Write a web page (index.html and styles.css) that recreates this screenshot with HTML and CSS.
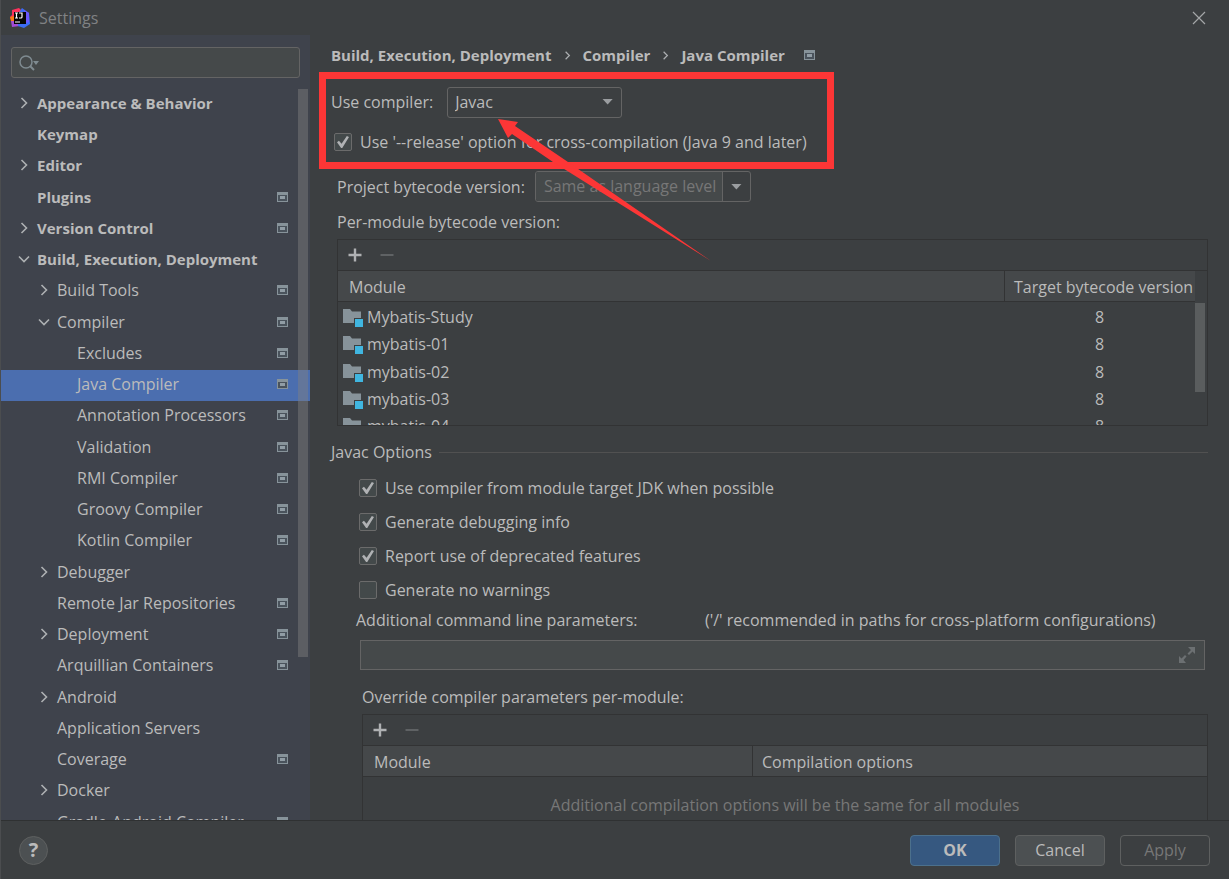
FILE: index.html
```html
<!DOCTYPE html>
<html lang="en">
<head>
<meta charset="utf-8">
<title>Settings</title>
<link rel="stylesheet" href="styles.css">
</head>
<body>
<svg class="defs" aria-hidden="true">
  <symbol id="scope" viewBox="0 0 11 10"><path d="M0 0h11v10H0z" fill="#87939a"/><path d="M1 3h9v6H1z" fill="#4a535c"/><path d="M3 4h5v3H3z" fill="#919da5"/></symbol>
  <symbol id="right" viewBox="0 0 12 12"><path d="M3.5 1 8.5 6l-5 5" fill="none" stroke="#adb0b2" stroke-width="1.6"/></symbol>
  <symbol id="down" viewBox="0 0 12 12"><path d="M1 3.500l5 5 5-5" fill="none" stroke="#adb0b2" stroke-width="1.600"/></symbol>
  <symbol id="module" viewBox="0 0 20 18"><path d="M0 0h7l2 2.500h9V9h-7v5H0z" fill="#87939a"/><path d="M12 10h8v8h-8z" fill="#40b6e0"/></symbol>
  <symbol id="plus" viewBox="0 0 14 14"><path d="M5.800.5h2.400v5.300h5.300v2.400H8.200v5.300H5.800V8.200H.5V5.800h5.300z" fill="#afb1b3"/></symbol>
  <symbol id="minus" viewBox="0 0 14 14"><path d="M.5 6h13v2H.5z" fill="#5f6264"/></symbol>
</svg>
<div class="window">
  <header class="titlebar">
    <svg class="logo" viewBox="0 0 20 20" aria-hidden="true">
      <path d="M2 2 9 0l4 4-4 7-8 1-1-3 2-2z" fill="#fe315d"/><path d="M0 9l4-1v6l-3-1z" fill="#f97a12"/><path d="M1 13h6l3 5-8 1z" fill="#a34bd5"/><path d="M12 0l7 5 1 11-6 4-6-2V6z" fill="#3b6cf5"/><path d="M14 2l5 3v9l-4 2z" fill="#6b57ff"/>
      <path d="M4 4h12v12H4z" fill="#050505"/><path d="M5 5h3M6.500 5v5M5 10h3M9 5h3v4q0 1-1 1H9M5 14h5" fill="none" stroke="#fff" stroke-width="1.200"/>
    </svg>
    <h1>Settings</h1>
    <button class="close" aria-label="Close"><svg viewBox="0 0 14 14"><path d="M1 1l12 12M13 1 1 13" stroke="#a4a6a8" stroke-width="1.200"/></svg></button>
  </header>
  <div class="body">
    <nav class="sidebar" aria-label="Settings categories">
      <div class="search">
        <svg viewBox="0 0 22 16" aria-hidden="true"><circle cx="7" cy="7" r="6" fill="none" stroke="#7f8b91" stroke-width="1.500"/><path d="M11 11l4 4" stroke="#7f8b91" stroke-width="2"/><path d="M14 6h6l-3 4z" fill="#7f8b91"/></svg>
        <input type="text" aria-label="Search settings">
      </div>
      <div class="treewrap">
        <ul class="tree">
          <li class="top"><svg class="arrow"><use href="#right"/></svg><span>Appearance &amp; Behavior</span></li>
          <li class="top"><i class="arrow"></i><span>Keymap</span></li>
          <li class="top"><svg class="arrow"><use href="#right"/></svg><span>Editor</span></li>
          <li class="top"><i class="arrow"></i><span>Plugins</span><svg class="scope"><use href="#scope"/></svg></li>
          <li class="top"><svg class="arrow"><use href="#right"/></svg><span>Version Control</span><svg class="scope"><use href="#scope"/></svg></li>
          <li class="top"><svg class="arrow"><use href="#down"/></svg><span>Build, Execution, Deployment</span></li>
          <li class="mid"><svg class="arrow"><use href="#right"/></svg><span>Build Tools</span><svg class="scope"><use href="#scope"/></svg></li>
          <li class="mid"><svg class="arrow"><use href="#down"/></svg><span>Compiler</span><svg class="scope"><use href="#scope"/></svg></li>
          <li class="leaf"><i class="arrow"></i><span>Excludes</span><svg class="scope"><use href="#scope"/></svg></li>
          <li class="leaf selected"><i class="arrow"></i><span>Java Compiler</span><svg class="scope"><use href="#scope"/></svg></li>
          <li class="leaf"><i class="arrow"></i><span>Annotation Processors</span><svg class="scope"><use href="#scope"/></svg></li>
          <li class="leaf"><i class="arrow"></i><span>Validation</span><svg class="scope"><use href="#scope"/></svg></li>
          <li class="leaf"><i class="arrow"></i><span>RMI Compiler</span><svg class="scope"><use href="#scope"/></svg></li>
          <li class="leaf"><i class="arrow"></i><span>Groovy Compiler</span><svg class="scope"><use href="#scope"/></svg></li>
          <li class="leaf"><i class="arrow"></i><span>Kotlin Compiler</span><svg class="scope"><use href="#scope"/></svg></li>
          <li class="mid"><svg class="arrow"><use href="#right"/></svg><span>Debugger</span></li>
          <li class="mid"><i class="arrow"></i><span>Remote Jar Repositories</span><svg class="scope"><use href="#scope"/></svg></li>
          <li class="mid"><svg class="arrow"><use href="#right"/></svg><span>Deployment</span><svg class="scope"><use href="#scope"/></svg></li>
          <li class="mid"><i class="arrow"></i><span>Arquillian Containers</span><svg class="scope"><use href="#scope"/></svg></li>
          <li class="mid"><svg class="arrow"><use href="#right"/></svg><span>Android</span></li>
          <li class="mid"><i class="arrow"></i><span>Application Servers</span></li>
          <li class="mid"><i class="arrow"></i><span>Coverage</span><svg class="scope"><use href="#scope"/></svg></li>
          <li class="mid"><svg class="arrow"><use href="#right"/></svg><span>Docker</span></li>
          <li class="mid"><i class="arrow"></i><span>Gradle-Android Compiler</span><svg class="scope"><use href="#scope"/></svg></li>
        </ul>
        <div class="thumb"></div>
      </div>
    </nav>
    <main class="content">
      <div class="crumbs"><span>Build, Execution, Deployment</span><svg class="sep"><use href="#right"/></svg><span>Compiler</span><svg class="sep"><use href="#right"/></svg><span>Java Compiler</span><svg class="scope"><use href="#scope"/></svg></div>
      <div class="row compiler"><label for="compiler">Use compiler:</label><div class="combo"><select id="compiler"><option>Javac</option></select></div></div>
      <label class="check release"><input type="checkbox" checked>Use '--release' option for cross-compilation (Java 9 and later)</label>
      <div class="row bytecode"><label for="level">Project bytecode version:</label><div class="editcombo"><input id="level" type="text" value="Same as language level" disabled><button aria-label="Choose version"></button></div></div>
      <h2 class="label permodule">Per-module bytecode version:</h2>
      <section class="panel modules">
        <div class="tools"><button aria-label="Add"><svg><use href="#plus"/></svg></button><button aria-label="Remove" disabled><svg><use href="#minus"/></svg></button></div>
        <div class="scroller">
          <table>
            <thead><tr><th>Module</th><th class="target">Target bytecode version</th></tr></thead>
            <tbody>
              <tr><td><svg class="module"><use href="#module"/></svg>Mybatis-Study</td><td>8</td></tr>
              <tr><td><svg class="module"><use href="#module"/></svg>mybatis-01</td><td>8</td></tr>
              <tr><td><svg class="module"><use href="#module"/></svg>mybatis-02</td><td>8</td></tr>
              <tr><td><svg class="module"><use href="#module"/></svg>mybatis-03</td><td>8</td></tr>
              <tr><td><svg class="module"><use href="#module"/></svg>mybatis-04</td><td>8</td></tr>
            </tbody>
          </table>
          <div class="track"><div class="grip"></div></div>
        </div>
      </section>
      <h2 class="group">Javac Options</h2>
      <div class="options">
        <label class="check"><input type="checkbox" checked>Use compiler from module target JDK when possible</label>
        <label class="check"><input type="checkbox" checked>Generate debugging info</label>
        <label class="check"><input type="checkbox" checked>Report use of deprecated features</label>
        <label class="check"><input type="checkbox">Generate no warnings</label>
      </div>
      <div class="params"><label for="params">Additional command line parameters:</label><span>('/' recommended in paths for cross-platform configurations)</span></div>
      <div class="field"><input id="params" type="text"><svg viewBox="0 0 16 16" aria-hidden="true"><path d="M9 0h7v7l-2.500-2.500L10 8 8.500 6.500 12 3zM0 9l2.500 2.500L6 8l1.500 1.500L4.500 13 7 16H0z" fill="#6c7072"/></svg></div>
      <h2 class="label override">Override compiler parameters per-module:</h2>
      <section class="panel overrides">
        <div class="tools"><button aria-label="Add"><svg><use href="#plus"/></svg></button><button aria-label="Remove" disabled><svg><use href="#minus"/></svg></button></div>
        <table><thead><tr><th class="name">Module</th><th>Compilation options</th></tr></thead></table>
        <p>Additional compilation options will be the same for all modules</p>
      </section>
      <svg class="annotation" viewBox="0 0 520 200" aria-hidden="true"><rect x="3.500" y="3.500" width="508" height="90" fill="none" stroke="#fc3636" stroke-width="7"/><path d="M179 47l20 3-3 4 53 36 143 99-158-99-41-28-4 4z" fill="#fc3636"/></svg>
    </main>
  </div>
  <footer class="footer">
    <button class="help" aria-label="Help">?</button>
    <button class="btn primary">OK</button>
    <button class="btn">Cancel</button>
    <button class="btn" disabled>Apply</button>
  </footer>
</div>
</body>
</html>
```
FILE: styles.css
```css
* { box-sizing: border-box; }
body { margin: 0; background: #3c3f41; color: #bbbbbb; font: 16px/22px "Open Sans", "Noto Sans", sans-serif; }
button, input, select { font: inherit; color: inherit; margin: 0; }
button { padding: 0; border: 0; background: none; }
h1, h2, p { margin: 0; font-size: inherit; font-weight: 400; }
svg { display: block; flex: none; }
.defs { display: none; }
.window { height: 100vh; display: flex; flex-direction: column; overflow: hidden; border-left: 1px solid #4b4d4f; }

.titlebar { flex: none; height: 35px; display: flex; align-items: center; gap: 9px; padding: 0 23px 0 9px; color: #808284; }
.logo { width: 20px; height: 20px; }
.close { margin-left: auto; }
.close svg { width: 14px; height: 14px; }

.body { flex: 1; min-height: 0; display: flex; }
.sidebar { flex: none; width: 309px; display: flex; flex-direction: column; background: #3f434c; padding-top: 12px; }
.search { flex: none; height: 31px; margin: 0 10px 11px; display: flex; align-items: center; padding-left: 7px; border: 1px solid #646464; border-radius: 3px; background: #45494a; }
.search svg { width: 22px; height: 16px; }
.search input { flex: 1; min-width: 0; border: 0; background: none; outline: 0; }
.treewrap { flex: 1; min-height: 0; position: relative; overflow: hidden; }
.tree { list-style: none; margin: 0; padding: 0; }
.tree li { height: 31px; display: flex; align-items: center; padding-right: 22px; padding-bottom: 4px; white-space: nowrap; }
.tree li:nth-child(4n+3) { margin-bottom: 1px; }
.tree .top { padding-left: 17px; font-weight: 700; font-size: 15px; }
.tree .mid { padding-left: 37px; }
.tree .leaf { padding-left: 57px; }
.tree .selected { background: #4b6eaf; }
.tree .arrow { width: 12px; height: 12px; margin-right: 7px; }
.scope { width: 11px; height: 10px; }
.tree .scope { margin-left: auto; }
.thumb { position: absolute; top: 0; right: 2px; width: 10px; height: 568px; background: rgba(128, 128, 128, .45); }

.content { flex: 1; min-width: 0; position: relative; overflow: hidden; display: flex; flex-direction: column; padding: 0 21px; }
.content > * { flex: none; }
.crumbs { height: 42px; display: flex; align-items: center; padding-bottom: 2px; font-weight: 700; font-size: 15px; }
.crumbs .sep { width: 9px; height: 9px; margin: 0 11px; }
.crumbs .scope { margin-left: 19px; }
.row { display: flex; align-items: center; }
.compiler { height: 50px; gap: 14px; }
.combo { position: relative; width: 175px; }
.combo::after { content: ""; position: absolute; right: 9px; top: 12px; width: 11px; height: 6px; background: #9a9da0; clip-path: polygon(0 0, 100% 0, 50% 100%); pointer-events: none; }
.combo select { appearance: none; width: 100%; height: 31px; padding: 0 7px; border: 1px solid #646464; border-radius: 3px; background: #3c3f41; }
.check { display: flex; align-items: center; gap: 8px; height: 34px; }
.check input { appearance: none; width: 18px; height: 18px; border: 1px solid #6b6b6b; border-radius: 2px; background: #43494a; }
.check input:checked::after { content: ""; display: block; width: 12px; height: 12px; margin: 2px; background: #b0b2b4; clip-path: polygon(0 52%, 16% 40%, 38% 64%, 82% 0, 100% 8%, 44% 100%, 34% 100%); }
.release { height: 30px; padding-left: 3px; }
.bytecode { margin-top: 14px; padding-left: 6px; gap: 10px; }
.editcombo { display: flex; width: 216px; height: 31px; border: 1px solid #646464; border-radius: 3px; overflow: hidden; }
.editcombo input { flex: 1; min-width: 0; padding: 0 0 2px 8px; border: 0; background: #45494a; color: #777777; }
.editcombo button { width: 28px; border-left: 1px solid #646464; display: grid; place-items: center; }
.editcombo button::after { content: ""; width: 11px; height: 6px; background: #9a9da0; clip-path: polygon(0 0, 100% 0, 50% 100%); }
.label { display: flex; align-items: center; }
.permodule { height: 37px; padding: 3px 0 0 6px; }

.panel { border: 1px solid #323334; }
.tools { height: 31px; display: flex; align-items: center; gap: 18px; padding-left: 10px; border-bottom: 1px solid #323334; }
.tools svg { width: 14px; height: 14px; }
.modules { margin-left: 6px; height: 187px; overflow: hidden; }
.scroller { display: flex; height: 155px; }
table { flex: 1; width: 100%; border-collapse: separate; border-spacing: 0; table-layout: fixed; }
th { height: 31px; padding: 2px 0 0 11px; text-align: left; font-weight: 400; white-space: nowrap; background: #45484a; border-bottom: 1px solid #323334; }
th + th { padding-left: 9px; border-left: 1px solid #323334; }
.target { width: 191px; }
.modules td { height: 27px; padding: 4px 0 0; line-height: 23px; }
.modules tr:nth-child(3n+2) td { height: 28px; padding-bottom: 1px; }
.modules td:last-child { text-align: center; }
.module { width: 20px; height: 18px; float: left; margin: 3px 4px 0 5px; }
.track { width: 12px; padding-top: 32px; }
.grip { width: 10px; height: 89px; background: #5a5d5e; }

.group { display: flex; align-items: center; gap: 7px; height: 45px; padding-top: 7px; }
.group::after { content: ""; flex: 1; height: 1px; background: #515151; }
.options { padding-left: 28px; }
.params { display: flex; align-items: center; height: 26px; margin-bottom: 7px; padding-left: 25px; white-space: nowrap; }
.params label { width: 349px; }
.field { display: flex; align-items: center; height: 30px; margin: 0 3px 0 29px; padding-right: 9px; border: 1px solid #646464; background: #45494a; }
.field input { flex: 1; min-width: 0; border: 0; background: none; outline: 0; }
.field svg { width: 16px; height: 16px; }
.override { height: 44px; padding: 10px 0 0 31px; }
.overrides { margin-left: 31px; height: 180px; }
.overrides .name { width: 389px; }
.overrides p { padding-top: 17px; text-align: center; color: #777777; }
.annotation { position: absolute; left: 9px; top: 37px; width: 520px; height: 200px; pointer-events: none; }

.footer { flex: none; height: 59px; display: flex; align-items: center; gap: 15px; padding: 0 19px 0 18px; border-top: 1px solid #2f3132; }
.help { width: 29px; height: 29px; margin-right: auto; border: 1px solid #5e6060; border-radius: 50%; background: #4c5052; font-size: 20px; font-weight: 700; }
.btn { width: 90px; height: 31px; border: 1px solid #5e6060; border-radius: 4px; background: #4c5052; }
.btn:disabled { background: none; color: #777777; }
.primary { background: #365880; border-color: #4c708c; font-weight: 700; }
```
